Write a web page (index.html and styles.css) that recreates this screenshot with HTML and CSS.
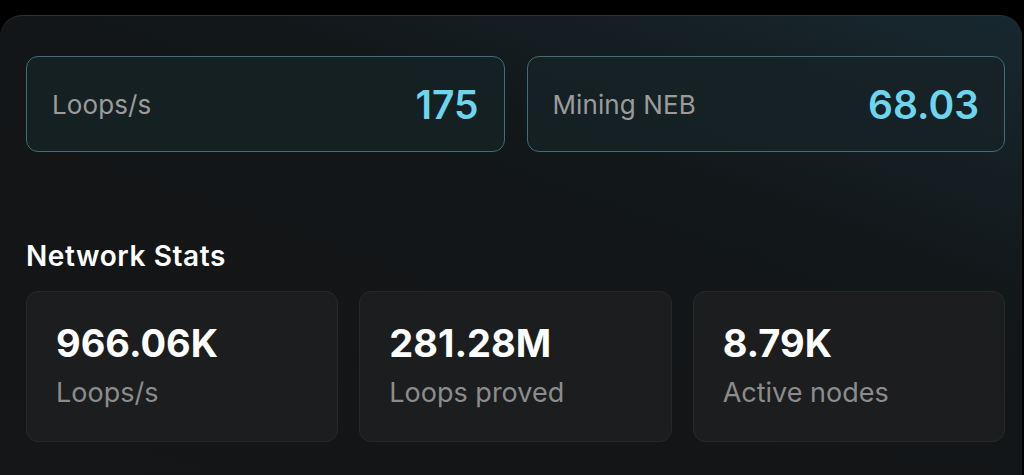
FILE: index.html
```html
<!DOCTYPE html>
<html>
<head>
<meta charset="utf-8">
<link rel="stylesheet" href="styles.css">
</head>
<body>
<div class="panel">
  <div class="top-row">
    <div class="hl-card">
      <span class="hl-label">Loops/s</span>
      <span class="hl-value">175</span>
    </div>
    <div class="hl-card">
      <span class="hl-label">Mining NEB</span>
      <span class="hl-value">68.03</span>
    </div>
  </div>
  <h2 class="section-title">Network Stats</h2>
  <div class="stats-row">
    <div class="stat-card">
      <div class="stat-value">966.06K</div>
      <div class="stat-label">Loops/s</div>
    </div>
    <div class="stat-card">
      <div class="stat-value">281.28M</div>
      <div class="stat-label">Loops proved</div>
    </div>
    <div class="stat-card">
      <div class="stat-value">8.79K</div>
      <div class="stat-label">Active nodes</div>
    </div>
  </div>
</div>
</body>
</html>
```

FILE: styles.css
```css
* { box-sizing: border-box; }
html, body {
  margin: 0;
  padding: 0;
  background: #000;
  height: 475px;
  overflow: hidden;
  font-family: Inter, "Noto Sans", sans-serif;
}
.panel {
  margin-top: 15px;
  width: 1022px;
  height: 460px;
  border-radius: 22px 22px 0 0;
  border-top: 1px solid #2a3336;
  background: linear-gradient(200deg, #182830 0%, #121719 35%, #141517 70%, #151618 100%);
  padding: 40px 17px 0 26px;
}
.top-row {
  display: flex;
  gap: 22px;
}
.hl-card {
  flex: 1;
  height: 96px;
  border: 1.5px solid #3e6e77;
  border-radius: 12px;
  background: rgba(22, 34, 38, 0.85);
  display: flex;
  align-items: center;
  justify-content: space-between;
  padding: 0 25px 0 25px;
}
.hl-label {
  font-size: 26px;
  color: #9b9b9b;
  font-weight: 400;
  letter-spacing: 0.1px;
}
.hl-value {
  font-size: 39px;
  color: #6cd6ef;
  font-weight: 600;
}
.section-title {
  margin: 88px 0 0 0;
  font-size: 28px;
  font-weight: 600;
  color: #fff;
  line-height: 32px;
  letter-spacing: 0.6px;
}
.stats-row {
  margin-top: 19px;
  display: flex;
  gap: 21px;
}
.stat-card {
  flex: 1;
  height: 151px;
  border: 1px solid #27282a;
  border-radius: 12px;
  background: #1c1d1f;
  padding: 28px 29px;
}
.stat-value {
  font-size: 38px;
  font-weight: 700;
  color: #fff;
  line-height: 46px;
}
.stat-label {
  font-size: 27px;
  color: #8c8c8c;
  line-height: 34px;
  margin-top: 10px;
}
```
